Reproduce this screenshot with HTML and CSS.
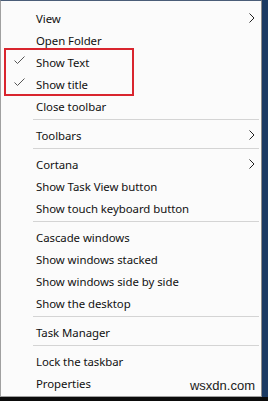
FILE: index.html
```html
<!DOCTYPE html>
<html lang="en">
<head>
  <meta charset="UTF-8">
  <meta name="viewport" content="width=device-width, initial-scale=1.0">
  <title>Taskbar menu</title>
  <link rel="stylesheet" href="styles.css">
</head>
<body>
  <div class="screen">
    <div class="menu">
      <div class="menu-item">View<svg class="arrow" width="6" height="10" viewBox="0 0 6 10"><polyline points="0.5,0.5 5,5 0.5,9.5" fill="none" stroke="#222" stroke-width="1"/></svg></div>
      <div class="menu-item">Open Folder</div>
      <div class="menu-item"><svg class="check" width="11" height="9" viewBox="0 0 11 9"><polyline points="0.5,4.5 3.5,7.5 10.5,0.5" fill="none" stroke="#555" stroke-width="1"/></svg>Show Text</div>
      <div class="menu-item"><svg class="check" width="11" height="9" viewBox="0 0 11 9"><polyline points="0.5,4.5 3.5,7.5 10.5,0.5" fill="none" stroke="#555" stroke-width="1"/></svg>Show title</div>
      <div class="menu-item">Close toolbar</div>
      <div class="separator"></div>
      <div class="menu-item">Toolbars<svg class="arrow" width="6" height="10" viewBox="0 0 6 10"><polyline points="0.5,0.5 5,5 0.5,9.5" fill="none" stroke="#222" stroke-width="1"/></svg></div>
      <div class="separator"></div>
      <div class="menu-item">Cortana<svg class="arrow" width="6" height="10" viewBox="0 0 6 10"><polyline points="0.5,0.5 5,5 0.5,9.5" fill="none" stroke="#222" stroke-width="1"/></svg></div>
      <div class="menu-item">Show Task View button</div>
      <div class="menu-item">Show touch keyboard button</div>
      <div class="separator"></div>
      <div class="menu-item">Cascade windows</div>
      <div class="menu-item">Show windows stacked</div>
      <div class="menu-item">Show windows side by side</div>
      <div class="menu-item">Show the desktop</div>
      <div class="separator"></div>
      <div class="menu-item">Task Manager</div>
      <div class="separator"></div>
      <div class="menu-item">Lock the taskbar</div>
      <div class="menu-item">Properties</div>

      <div class="highlight"></div>
      <div class="watermark">wsxdn.com</div>
    </div>
    <div class="taskbar"></div>
  </div>
</body>
</html>
```

FILE: styles.css
```css
body {
  margin: 0;
  padding: 0;
  background-color: #1b3a63;
  font-family: 'Noto Sans', sans-serif;
}
.screen {
  width: 268px;
  height: 401px;
  display: flex;
  flex-direction: column;
}
.menu {
  position: relative;
  width: 262px;
  height: 397px;
  box-sizing: border-box;
  background-color: #fbfbfb;
  border-top: 1px solid #4a5d78;
  border-left: 1px solid #a0a0a0;
  border-right: 1px solid #8a8a8a;
  border-bottom: 1px solid #a0a0a0;
  padding-top: 5px;
}
.menu-item {
  position: relative;
  height: 20px;
  padding-top: 2px;
  line-height: 22px;
  padding-left: 35px;
  font-size: 11.4px;
  letter-spacing: -0.05px;
  color: #111;
  white-space: nowrap;
}
.separator {
  height: 1px;
  margin: 3px 2px 3px 32px;
  background-color: #d4d4d4;
}
.arrow {
  position: absolute;
  left: 248px;
  top: 7px;
}
.check {
  position: absolute;
  left: 13px;
  top: 6px;
}
.highlight {
  position: absolute;
  left: 3px;
  top: 47px;
  width: 126px;
  height: 44px;
  border: 2px solid #d9252e;
}
.watermark {
  position: absolute;
  right: 6px;
  bottom: 3px;
  font-family: 'Liberation Sans', Arial, sans-serif;
  font-size: 13px;
  color: #1a1a1a;
}
.taskbar {
  flex: 1;
  background-color: #0b0b0b;
}
```
